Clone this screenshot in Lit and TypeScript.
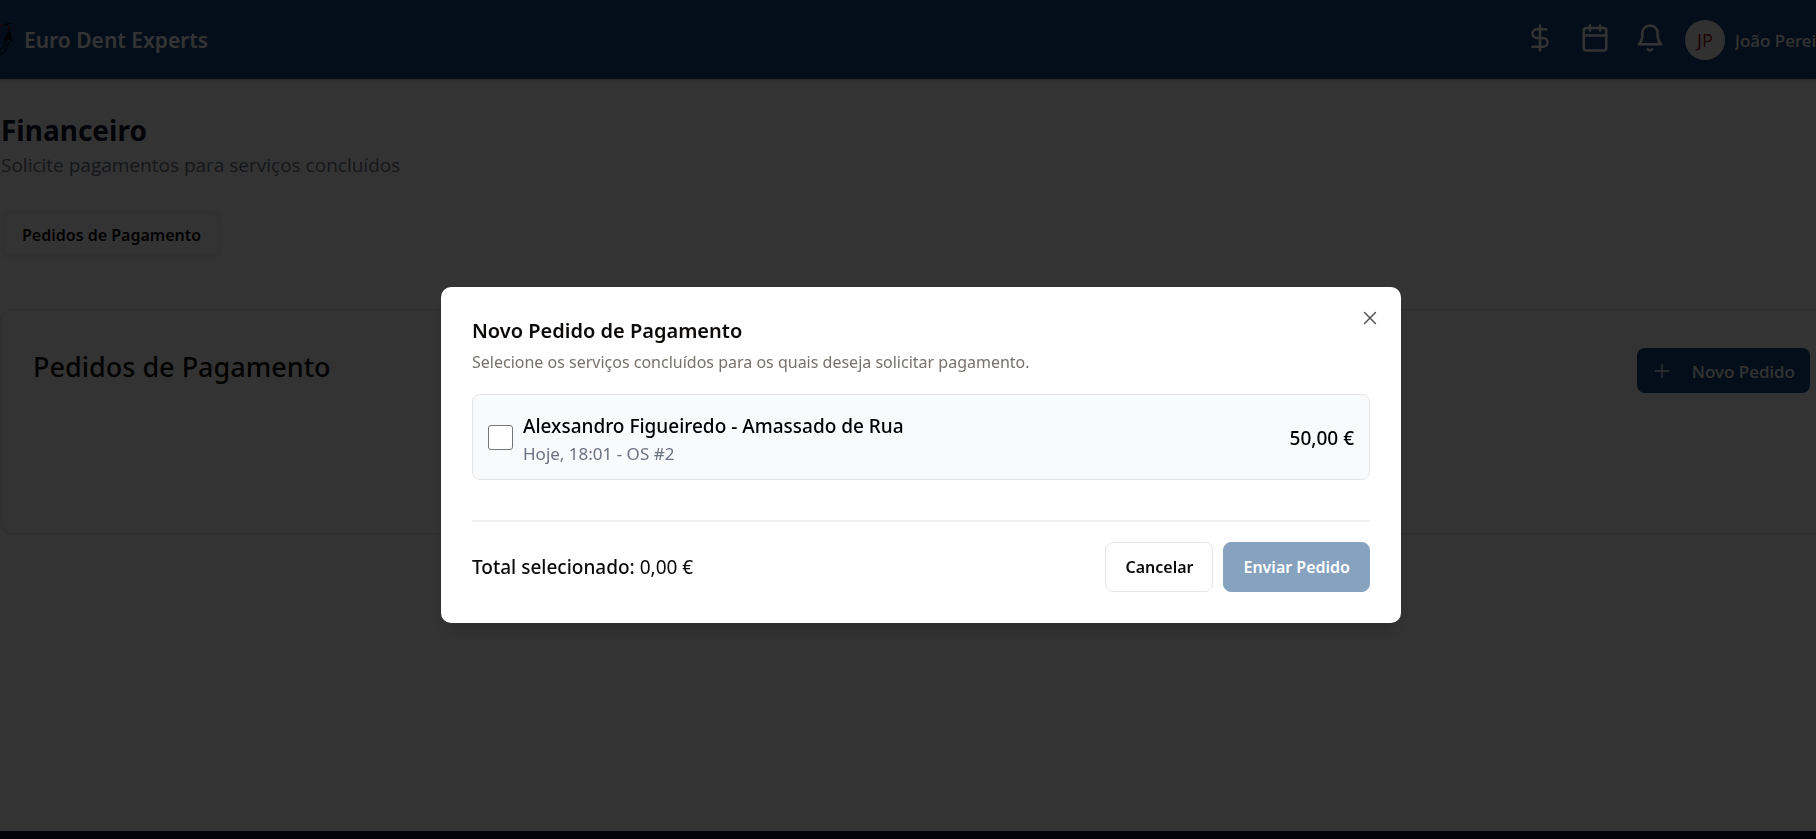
import { LitElement, html, css } from "lit";
import { customElement, state } from "lit/decorators.js";

interface Service {
  id: number;
  client: string;
  when: string;
  price: number;
}

const euro = (value: number) => `${value.toFixed(2).replace(".", ",")} €`;

@customElement("payment-dialog")
export class PaymentDialog extends LitElement {
  static styles = css`
    :host {
      display: block;
      width: 100%;
      max-width: 960px;
    }
    * {
      box-sizing: border-box;
    }
    .dialog {
      position: relative;
      padding: 31px;
      border-radius: 10px;
      background: #fff;
      color: #0c0a09;
      box-shadow: 0 12px 20px -4px rgba(0, 0, 0, 0.15);
    }
    h2 {
      margin: 0;
      font-size: 20px;
      line-height: 26px;
      font-weight: 600;
    }
    .hint {
      margin: 4px 0 0;
      font-size: 16px;
      line-height: 28px;
      color: #78716c;
    }
    .close {
      position: absolute;
      top: 21px;
      right: 21px;
      display: flex;
      padding: 0;
      border: 0;
      background: none;
      color: #0c0a09;
      opacity: 0.7;
    }
    .service {
      display: flex;
      align-items: center;
      gap: 10px;
      margin-top: 18px;
      padding: 14px 15px 13px;
      border: 1px solid #e7e5e4;
      border-radius: 8px;
      background: #f8fafc;
      color: #000;
    }
    .tick {
      flex: none;
      appearance: none;
      width: 25px;
      height: 25px;
      margin: 0;
      border: 1px solid #767676;
      border-radius: 3px;
      background: #fff;
    }
    .tick:checked {
      background: #0f4780;
    }
    .info {
      flex: 1;
      display: grid;
      padding-top: 2px;
    }
    .client {
      font-size: 19px;
      line-height: 30px;
      font-weight: 500;
    }
    .when {
      font-size: 17px;
      line-height: 25px;
      color: #6b7280;
    }
    .price {
      padding-top: 2px;
      font-size: 19px;
      line-height: 30px;
      font-weight: 500;
    }
    .foot {
      display: flex;
      align-items: center;
      gap: 10px;
      margin-top: 40px;
      padding-top: 20px;
      border-top: 2px solid #efefef;
    }
    .total {
      flex: 1;
      font-size: 19px;
      line-height: 30px;
    }
    .total b {
      font-weight: 500;
    }
    .btn {
      height: 50px;
      padding: 2px 19px 0;
      border: 1px solid #e7e5e4;
      border-radius: 8px;
      background: #fff;
      font: 600 16px/25px "Noto Sans", "Open Sans", sans-serif;
      color: #0c0a09;
    }
    .send {
      border-color: #0f4780;
      background: #0f4780;
      color: #fff;
    }
    .send:disabled {
      opacity: 0.5;
    }
  `;

  @state() private selected = false;

  private service: Service = {
    id: 2,
    client: "Alexsandro Figueiredo - Amassado de Rua",
    when: "Hoje, 18:01",
    price: 50,
  };

  private toggle(e: Event) {
    this.selected = (e.target as HTMLInputElement).checked;
  }

  render() {
    const s = this.service;
    return html`
      <section class="dialog" role="dialog" aria-modal="true" aria-labelledby="title">
        <h2 id="title">Novo Pedido de Pagamento</h2>
        <p class="hint">Selecione os serviços concluídos para os quais deseja solicitar pagamento.</p>
        <label class="service" for="service">
          <input class="tick" id="service" type="checkbox" .checked=${this.selected} @change=${this.toggle} />
          <span class="info">
            <span class="client">${s.client}</span>
            <span class="when">${s.when} - OS #${s.id}</span>
          </span>
          <span class="price">${euro(s.price)}</span>
        </label>
        <div class="foot">
          <div class="total"><b>Total selecionado:</b> ${euro(this.selected ? s.price : 0)}</div>
          <button class="btn" type="button">Cancelar</button>
          <button class="btn send" type="button" ?disabled=${!this.selected}>Enviar Pedido</button>
        </div>
        <button class="close" type="button" aria-label="Fechar">
          <svg width="20" height="20" viewBox="0 0 15 15" fill="none" stroke="currentColor" stroke-width="1.1" stroke-linecap="round">
            <path d="M3.4 3.4l8.2 8.2M11.6 3.4l-8.2 8.2" />
          </svg>
        </button>
      </section>
    `;
  }
}

@customElement("app-root")
export class AppRoot extends LitElement {
  static styles = css`
    :host {
      display: block;
      font-family: "Noto Sans", "Open Sans", sans-serif;
    }
    * {
      box-sizing: border-box;
    }
    .page {
      display: flex;
      flex-direction: column;
      min-height: 100vh;
      overflow: hidden;
      background: #fff;
      color: #000;
    }
    .bar {
      display: flex;
      align-items: center;
      height: 79px;
      background: #0f4780;
      color: #fff;
      box-shadow: 0 2px 6px rgba(0, 0, 0, 0.2);
    }
    .logo {
      flex: none;
      margin-right: 10px;
    }
    .brand {
      flex: 1;
      font-size: 21px;
      line-height: 30px;
      font-weight: 600;
    }
    .tools {
      display: flex;
      align-items: center;
      gap: 25px;
    }
    .tool {
      display: flex;
      padding: 0 0 3px;
      border: 0;
      background: none;
      color: inherit;
    }
    .user {
      display: flex;
      align-items: center;
      gap: 10px;
      margin-left: -5px;
    }
    .avatar {
      display: grid;
      place-items: center;
      width: 40px;
      height: 40px;
      border-radius: 50%;
      background: #f5f5f4;
      color: #991b1b;
      font-size: 18px;
    }
    .name {
      width: 81px;
      padding-top: 2px;
      overflow: hidden;
      white-space: nowrap;
      font-size: 17px;
      line-height: 25px;
      font-weight: 500;
    }
    main {
      flex: 1;
      padding: 33px 0 40px 1px;
    }
    h1 {
      margin: 0;
      font-size: 28px;
      line-height: 36px;
      font-weight: 700;
      color: #111827;
    }
    .lead {
      margin: 0;
      font-family: "Open Sans", "Noto Sans", sans-serif;
      font-size: 19px;
      line-height: 34px;
      color: #6b7280;
    }
    .tabs {
      display: inline-flex;
      margin-top: 28px;
      padding: 5px;
      border-radius: 8px;
      background: #f5f5f4;
    }
    .tab {
      height: 39px;
      padding: 2px 16px 0;
      border: 0;
      border-radius: 5px;
      background: #fff;
      color: #0c0a09;
      font: 600 16px/25px "Noto Sans", "Open Sans", sans-serif;
    }
    .card {
      display: flex;
      align-items: flex-start;
      justify-content: space-between;
      min-height: 225px;
      margin: 50px -26px 0 0;
      padding: 38px 31px;
      border: 1px solid #e7e5e4;
      border-radius: 12px;
      box-shadow: 0 1px 3px rgba(0, 0, 0, 0.1);
    }
    .card h2 {
      margin: 0;
      font-size: 27px;
      line-height: 38px;
      font-weight: 500;
      color: #0c0a09;
    }
    .new {
      display: flex;
      align-items: center;
      gap: 20px;
      height: 45px;
      padding: 0 15px;
      border: 0;
      border-radius: 8px;
      background: #0f4780;
      color: #fff;
      font: 500 17px/25px "Noto Sans", "Open Sans", sans-serif;
    }
    .new span {
      padding-top: 2px;
    }
    .strip {
      height: 8px;
      background: #0b0b28;
    }
    .overlay {
      position: fixed;
      inset: 0;
      display: flex;
      align-items: center;
      justify-content: center;
      padding: 70px 0 0 26px;
      background: rgba(0, 0, 0, 0.8);
    }
  `;

  render() {
    return html`
      <div class="page">
        <header class="bar">
          <svg class="logo" width="14" height="36" viewBox="0 0 14 36" fill="none" stroke="#000" stroke-width="1">
            <path d="M0 4q5-2 12-3M7 2q3 3 2 9M0 33q6-3 9-13M0 28q4-2 6-9" />
            <path d="M6 13l4-3 2 9-3-2-5 3z" fill="#000" />
            <path d="M0 4l3-1M8 4l1 4" stroke="#8a1010" stroke-width="1.500" />
          </svg>
          <div class="brand">Euro Dent Experts</div>
          <nav class="tools">
            <button class="tool" type="button" aria-label="Financeiro">
              <svg width="30" height="30" viewBox="0 0 24 24" fill="none" stroke="currentColor" stroke-width="2" stroke-linecap="round" stroke-linejoin="round">
                <path d="M12 2v20M17 5H9.500a3.500 3.500 0 0 0 0 7h5a3.500 3.500 0 0 1 0 7H6" />
              </svg>
            </button>
            <button class="tool" type="button" aria-label="Agenda">
              <svg width="30" height="30" viewBox="0 0 24 24" fill="none" stroke="currentColor" stroke-width="2" stroke-linecap="round" stroke-linejoin="round">
                <path d="M8 2v4M16 2v4M3 10h18" />
                <rect x="3" y="4" width="18" height="18" rx="2" />
              </svg>
            </button>
            <button class="tool" type="button" aria-label="Notificações">
              <svg width="30" height="30" viewBox="0 0 24 24" fill="none" stroke="currentColor" stroke-width="2" stroke-linecap="round" stroke-linejoin="round">
                <path d="M6 8a6 6 0 0 1 12 0c0 7 3 9 3 9H3s3-2 3-9M10.300 21a1.940 1.940 0 0 0 3.400 0" />
              </svg>
            </button>
            <div class="user">
              <span class="avatar">JP</span>
              <span class="name">João Pereira</span>
            </div>
          </nav>
        </header>
        <main>
          <h1>Financeiro</h1>
          <p class="lead">Solicite pagamentos para serviços concluídos</p>
          <div class="tabs" role="tablist">
            <button class="tab" type="button" role="tab" aria-selected="true">Pedidos de Pagamento</button>
          </div>
          <section class="card">
            <h2>Pedidos de Pagamento</h2>
            <button class="new" type="button">
              <svg width="20" height="20" viewBox="0 0 15 15" fill="none" stroke="currentColor" stroke-width="1" stroke-linecap="round">
                <path d="M7.500 2.500v10M2.500 7.500h10" />
              </svg>
              <span>Novo Pedido</span>
            </button>
          </section>
        </main>
        <div class="strip"></div>
      </div>
      <div class="overlay"><payment-dialog></payment-dialog></div>
    `;
  }
}
